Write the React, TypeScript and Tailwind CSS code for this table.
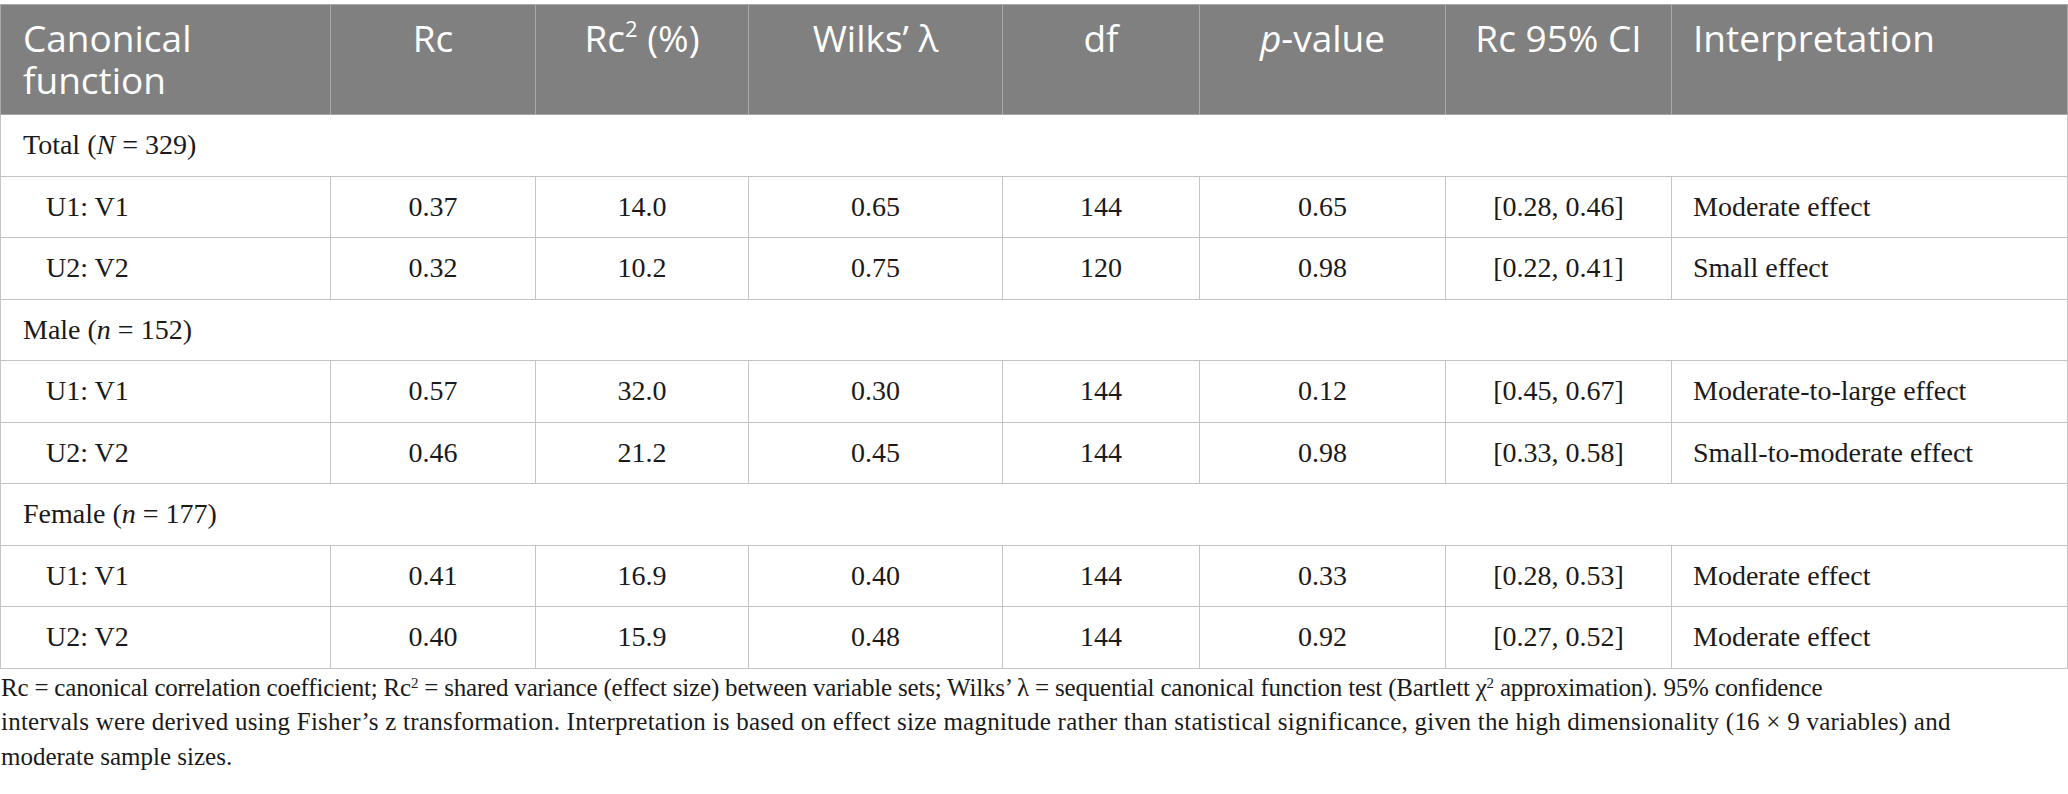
import React from "react";

const serif = "font-['Liberation_Serif','Times_New_Roman',serif]";

type Row =
  | { kind: "group"; label: React.ReactNode }
  | { kind: "data"; cells: string[] };

const rows: Row[] = [
  { kind: "group", label: <>Total (<i>N</i> = 329)</> },
  { kind: "data", cells: ["U1: V1", "0.37", "14.0", "0.65", "144", "0.65", "[0.28, 0.46]", "Moderate effect"] },
  { kind: "data", cells: ["U2: V2", "0.32", "10.2", "0.75", "120", "0.98", "[0.22, 0.41]", "Small effect"] },
  { kind: "group", label: <>Male (<i>n</i> = 152)</> },
  { kind: "data", cells: ["U1: V1", "0.57", "32.0", "0.30", "144", "0.12", "[0.45, 0.67]", "Moderate-to-large effect"] },
  { kind: "data", cells: ["U2: V2", "0.46", "21.2", "0.45", "144", "0.98", "[0.33, 0.58]", "Small-to-moderate effect"] },
  { kind: "group", label: <>Female (<i>n</i> = 177)</> },
  { kind: "data", cells: ["U1: V1", "0.41", "16.9", "0.40", "144", "0.33", "[0.28, 0.53]", "Moderate effect"] },
  { kind: "data", cells: ["U2: V2", "0.40", "15.9", "0.48", "144", "0.92", "[0.27, 0.52]", "Moderate effect"] },
];

const widths = [330, 205, 213, 254, 197, 246, 226, 396];

export default function App() {
  const th =
    "border border-[#a9a9a9] align-top pt-[12px] pb-0 text-[37px] leading-[42px] font-normal text-white";
  const td = "border border-[#c4c4c4] h-[61.5px] p-0 align-middle";
  return (
    <div className="bg-white w-[2068px] h-[794px] overflow-hidden pt-[4px]">
      <table className="border-collapse table-fixed w-[2067px] border border-[#b8b8b8]">
        <colgroup>
          {widths.map((w, i) => (
            <col key={i} style={{ width: w }} />
          ))}
        </colgroup>
        <thead>
          <tr className="bg-[#808080] h-[110px] font-['Open_Sans','Noto_Sans',sans-serif]">
            <th className={`${th} text-left pl-[22px]`}>
              <div>Canonical</div>
              <div>function</div>
            </th>
            <th className={`${th} text-center`}>Rc</th>
            <th className={`${th} text-center`}>
              Rc<sup className="text-[22px] top-[-0.7em]">2</sup> (%)
            </th>
            <th className={`${th} text-center`}>Wilks’ λ</th>
            <th className={`${th} text-center`}>df</th>
            <th className={`${th} text-center`}>
              <i>p</i>-value
            </th>
            <th className={`${th} text-center`}>Rc 95% CI</th>
            <th className={`${th} text-left pl-[21px]`}>Interpretation</th>
          </tr>
        </thead>
        <tbody className={`${serif} text-[28px] text-[#1a1a1a]`}>
          {rows.map((r, i) =>
            r.kind === "group" ? (
              <tr key={i}>
                <td colSpan={8} className={`${td} pl-[22px]`}>
                  {r.label}
                </td>
              </tr>
            ) : (
              <tr key={i}>
                {r.cells.map((c, j) => (
                  <td
                    key={j}
                    className={`${td} ${
                      j === 0 ? "pl-[45px] text-left" : j === 7 ? "pl-[21px] text-left" : "text-center"
                    }`}
                  >
                    {c}
                  </td>
                ))}
              </tr>
            )
          )}
        </tbody>
      </table>
      <div className={`${serif} text-[25px] leading-[34.5px] text-[#1a1a1a] pt-[2px] pl-[1px]`}>
        <div className="whitespace-nowrap tracking-[-0.2px]">
          Rc = canonical correlation coefficient; Rc<sup className="text-[15px]">2</sup> = shared variance (effect
          size) between variable sets; Wilks’ λ = sequential canonical function test (Bartlett χ
          <sup className="text-[15px]">2</sup> approximation). 95% confidence
        </div>
        <div className="whitespace-nowrap tracking-[0.24px]">
          intervals were derived using Fisher’s z transformation. Interpretation is based on effect size magnitude
          rather than statistical significance, given the high dimensionality (16 × 9 variables) and
        </div>
        <div className="whitespace-nowrap">moderate sample sizes.</div>
      </div>
    </div>
  );
}
